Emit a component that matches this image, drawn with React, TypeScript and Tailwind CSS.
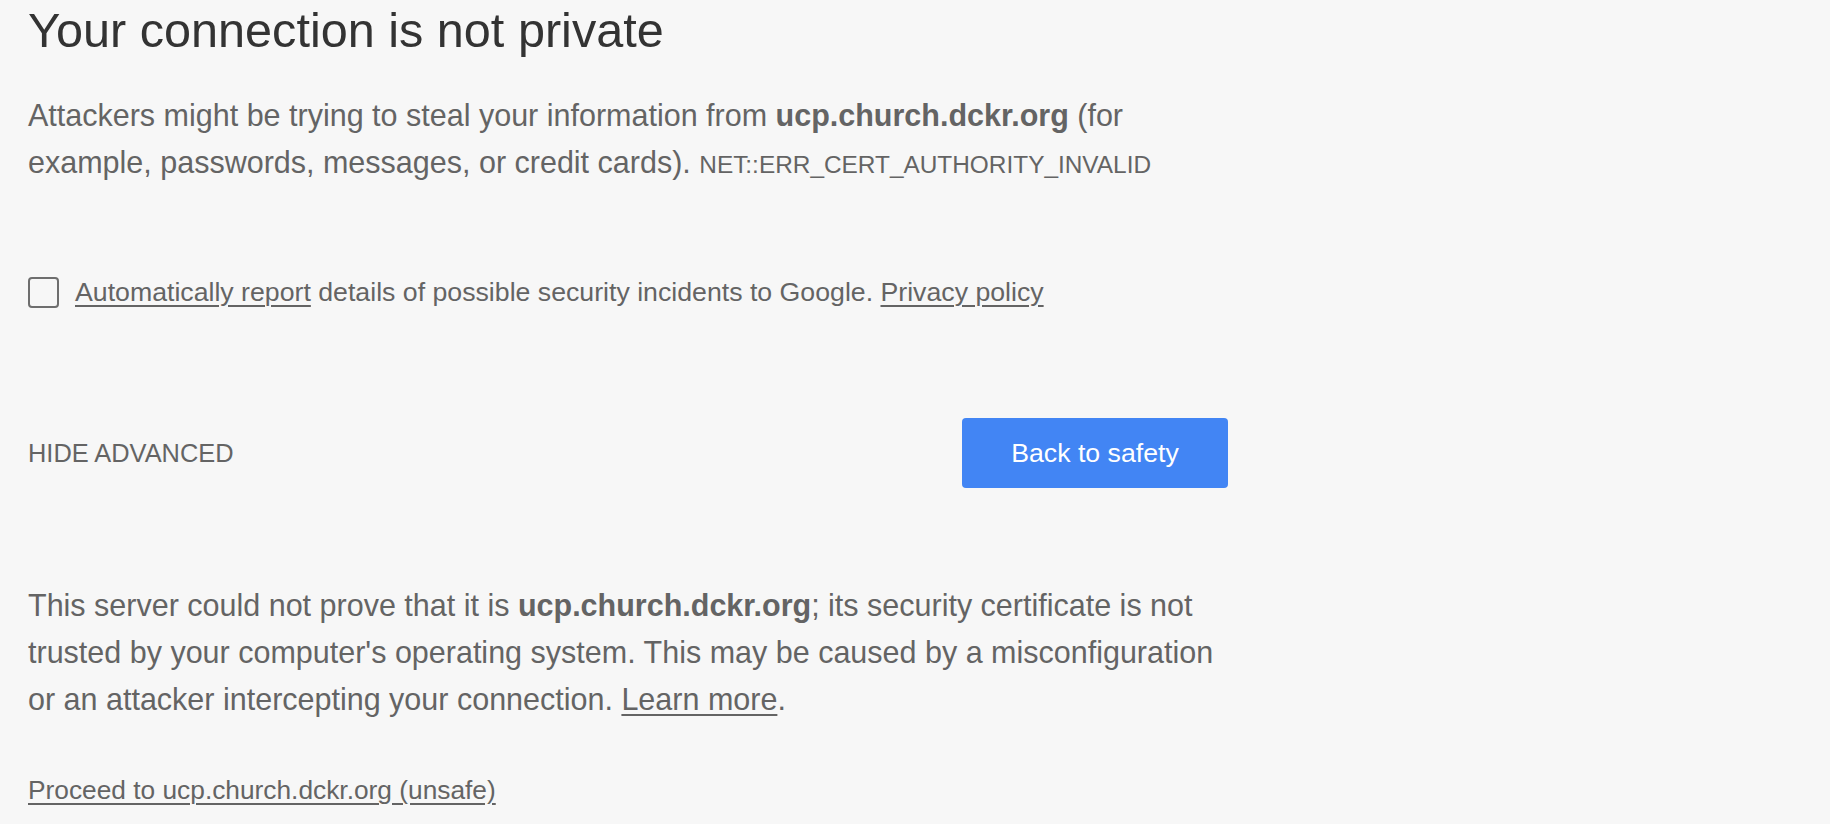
import React from "react";

const LINK = "underline decoration-2 underline-offset-[4px]";

const App = () => {
  return (
    <div className="min-h-screen w-full bg-[#f7f7f7] font-['Liberation_Sans',Arial,sans-serif] text-[#646464]">
      <div className="w-[1228px] pl-[28px]">
        <h1 className="text-[48.6px] leading-[60px] text-[#333333]">
          Your connection is not private
        </h1>

        <p className="mt-[32px] text-[30.5px] leading-[47px]">
          Attackers might be trying to steal your information from{" "}
          <strong className="font-bold">ucp.church.dckr.org</strong> (for
          example, passwords, messages, or credit cards).{" "}
          <span className="text-[24.4px]">NET::ERR_CERT_AUTHORITY_INVALID</span>
        </p>

        <label className="mt-[88px] flex items-center">
          <span
            className="h-[31px] w-[31px] shrink-0 rounded-[4px] border-2 border-[#6e6e6e]"
            aria-hidden="true"
          ></span>
          <span className="ml-[16px] text-[26.7px] leading-[32px]">
            <a className={LINK}>Automatically report</a> details of possible
            security incidents to Google. <a className={LINK}>Privacy policy</a>
          </span>
        </label>

        <div className="mt-[110px] flex items-center justify-between">
          <button className="text-[25.4px] uppercase text-[#646464]">
            Hide advanced
          </button>
          <button className="flex h-[70px] w-[266px] items-center justify-center rounded-[4px] bg-[#4285f4] text-[26.7px] font-medium text-white">
            Back to safety
          </button>
        </div>

        <p className="mt-[94px] text-[30.5px] leading-[47px]">
          This server could not prove that it is{" "}
          <strong className="font-bold">ucp.church.dckr.org</strong>; its
          security certificate is not trusted by your computer's operating
          system. This may be caused by a misconfiguration or an attacker
          intercepting your connection. <a className={LINK}>Learn more</a>.
        </p>

        <p className="mt-[47px] text-[26.3px] leading-[40px]">
          <a className={LINK}>Proceed to ucp.church.dckr.org (unsafe)</a>
        </p>
      </div>
    </div>
  );
};

export default App;
